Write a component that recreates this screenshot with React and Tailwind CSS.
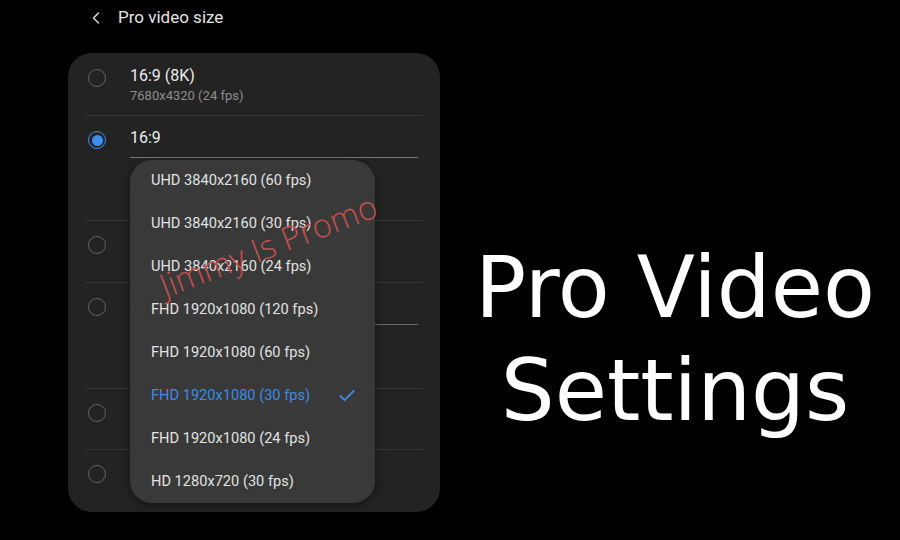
import { Check, ChevronLeft } from "lucide-react";

const SIZES = [
  "UHD 3840x2160 (60 fps)",
  "UHD 3840x2160 (30 fps)",
  "UHD 3840x2160 (24 fps)",
  "FHD 1920x1080 (120 fps)",
  "FHD 1920x1080 (60 fps)",
  "FHD 1920x1080 (30 fps)",
  "FHD 1920x1080 (24 fps)",
  "HD 1280x720 (30 fps)",
];

const Radio = ({ on }) =>
  on ? (
    <div className="w-[18px] h-[18px] rounded-full border-[1.5px] border-[#3d8cf0] flex items-center justify-center">
      <div className="w-[11px] h-[11px] rounded-full bg-[#3d8cf0]" />
    </div>
  ) : (
    <div className="w-[18px] h-[18px] rounded-full border-[1.5px] border-[#626262]" />
  );

const Row = ({ h, on, divider, children }) => (
  <div className={`${h} relative flex pl-[20px] pt-[16px]`}>
    {divider && <div className="absolute top-0 left-[17px] right-[17px] h-px bg-[#353535]" />}
    <div className="w-[18px] shrink-0">
      <Radio on={on} />
    </div>
    <div className="ml-[24px] flex-1 pr-[22px]">{children}</div>
  </div>
);

const App = () => {
  return (
    <div className="w-[900px] h-[540px] bg-black flex overflow-hidden font-['Roboto',sans-serif]">
      <div className="w-[450px] flex flex-col pl-[68px]">
        <div className="h-[36px] flex items-center pl-[20px] text-[#e4e4e4]">
          <ChevronLeft size={20} strokeWidth={1.6} className="-ml-[2px]" />
          <span className="ml-[12px] text-[17px]">Pro video size</span>
        </div>

        <div className="mt-[17px] w-[372px] h-[459px] rounded-[24px] bg-[#232323] relative">
          <Row h="h-[62px]">
            <div className="text-[16px] leading-[18px] text-[#ececec] -mt-[2px]">16:9 (8K)</div>
            <div className="text-[13px] leading-[16px] text-[#8e8e8e] mt-[3px]">7680x4320 (24 fps)</div>
          </Row>
          <Row h="h-[105px]" on divider>
            <div className="text-[16px] leading-[18px] text-[#ececec] -mt-[2px]">16:9</div>
            <div className="mt-[10px] h-px bg-[#7a7a7a]" />
          </Row>
          <Row h="h-[62px]" divider>
            <div className="text-[16px] leading-[18px] text-[#ececec] -mt-[2px]">21:9</div>
          </Row>
          <Row h="h-[106px]" divider>
            <div className="text-[16px] leading-[18px] text-[#ececec] -mt-[2px]">4:3</div>
            <div className="mt-[10px] h-px bg-[#6a6a6a]" />
          </Row>
          <Row h="h-[61px]" divider>
            <div className="text-[16px] leading-[18px] text-[#ececec] -mt-[2px]">1:1</div>
          </Row>
          <Row h="h-[63px]" divider>
            <div className="text-[16px] leading-[18px] text-[#ececec] -mt-[2px]">Full</div>
          </Row>

          <div className="absolute left-[62px] top-[107px] w-[245px] h-[343px] rounded-[22px] bg-[#393939] shadow-[0_2px_10px_rgba(0,0,0,0.45)] flex flex-col">
            {SIZES.map((s, i) => {
              const sel = i === 5;
              return (
                <div key={s} className="h-[43px] flex items-center pl-[21px] pr-[18px] text-[14.6px]">
                  <span className={sel ? "text-[#3a8de4] flex-1" : "text-[#e2e2e2] flex-1"}>{s}</span>
                  {sel && <Check size={20} strokeWidth={2.2} className="text-[#3a8de4]" />}
                </div>
              );
            })}
          </div>

          <div className="absolute left-[93px] top-[214px] -rotate-[21deg] origin-left text-[33px] leading-[40px] font-light text-[#c2504e] whitespace-nowrap font-['Open_Sans',sans-serif] pointer-events-none">
            Jimmy Is Promo
          </div>
        </div>
      </div>

      <div className="flex-1 pt-[236px] text-center text-white text-[85px] leading-[103px] font-['DejaVu_Sans',sans-serif]">
        <div>Pro Video</div>
        <div>Settings</div>
      </div>
    </div>
  );
};

export default App;
